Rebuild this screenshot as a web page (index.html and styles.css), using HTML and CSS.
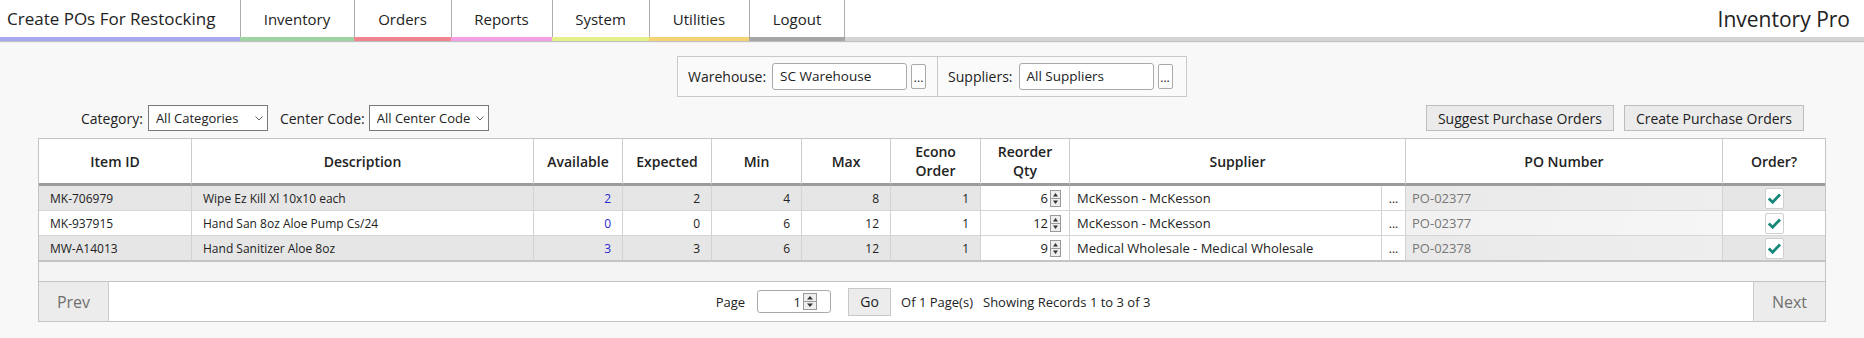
FILE: index.html
```html
<!DOCTYPE html>
<html lang="en">
<head>
<meta charset="utf-8">
<title>Create POs For Restocking</title>
<link rel="stylesheet" href="styles.css">
</head>
<body>
<nav class="topnav">
  <div class="nav-title">Create POs For Restocking</div>
  <a class="tab tab-inventory">Inventory</a>
  <a class="tab tab-orders">Orders</a>
  <a class="tab tab-reports">Reports</a>
  <a class="tab tab-system">System</a>
  <a class="tab tab-utilities">Utilities</a>
  <a class="tab tab-logout">Logout</a>
  <div class="nav-rest"><span class="brand">Inventory Pro</span></div>
</nav>

<main class="page">
  <div class="filters">
    <div class="filter-group">
      <span class="filter-label">Warehouse:</span>
      <div class="text-input">SC Warehouse</div>
      <span class="dots-btn">...</span>
    </div>
    <div class="filter-group filter-group-2">
      <span class="filter-label">Suppliers:</span>
      <div class="text-input">All Suppliers</div>
      <span class="dots-btn">...</span>
    </div>
  </div>

  <div class="toolbar">
    <div class="toolbar-left">
      <span class="lbl">Category:</span>
      <div class="select"><span class="select-text">All Categories</span><svg class="chev" width="8" height="5" viewBox="0 0 8 5"><path d="M0.5 0.5 L4 4 L7.5 0.5" fill="none" stroke="#666" stroke-width="1"/></svg></div>
      <span class="lbl lbl-center">Center Code:</span>
      <div class="select"><span class="select-text">All Center Code</span><svg class="chev" width="8" height="5" viewBox="0 0 8 5"><path d="M0.5 0.5 L4 4 L7.5 0.5" fill="none" stroke="#666" stroke-width="1"/></svg></div>
    </div>
    <div class="toolbar-right">
      <span class="btn">Suggest Purchase Orders</span>
      <span class="btn">Create Purchase Orders</span>
    </div>
  </div>

  <div class="grid">
    <table class="data">
      <colgroup>
        <col class="c-id"><col class="c-desc"><col class="c-avail"><col class="c-exp"><col class="c-min"><col class="c-max"><col class="c-econo"><col class="c-qty"><col class="c-sup"><col class="c-dots"><col class="c-po"><col>
      </colgroup>
      <thead>
        <tr>
          <th>Item ID</th><th>Description</th><th>Available</th><th>Expected</th><th>Min</th><th>Max</th><th>Econo<br>Order</th><th>Reorder<br>Qty</th><th colspan="2">Supplier</th><th>PO Number</th><th class="last">Order?</th>
        </tr>
      </thead>
      <tbody>
        <tr class="odd">
          <td>MK-706979</td><td>Wipe Ez Kill Xl 10x10 each</td><td class="num avail">2</td><td class="num">2</td><td class="num">4</td><td class="num">8</td><td class="num">1</td>
          <td class="qty"><div class="qty-box"><span>6</span><svg class="spin" width="11" height="17" viewBox="0 0 11 17"><rect x="0.5" y="0.5" width="10" height="16" fill="#eee" stroke="#999"/><line x1="1" y1="8.5" x2="10" y2="8.5" stroke="#999"/><path d="M3 6.5 L5.5 3 L8 6.5Z" fill="#333"/><path d="M3 10.5 L5.5 14 L8 10.5Z" fill="#333"/></svg></div></td>
          <td class="sup">McKesson - McKesson</td><td class="dots">...</td><td class="po">PO-02377</td>
          <td class="chk last"><span class="checkbox"><svg width="19" height="21" viewBox="0 0 19 21"><path d="M3.8 10.6 L7.6 14.2 L15 6.6" fill="none" stroke="#17877a" stroke-width="2.8"/></svg></span></td>
        </tr>
        <tr class="even">
          <td>MK-937915</td><td>Hand San 8oz Aloe Pump Cs/24</td><td class="num avail">0</td><td class="num">0</td><td class="num">6</td><td class="num">12</td><td class="num">1</td>
          <td class="qty"><div class="qty-box"><span>12</span><svg class="spin" width="11" height="17" viewBox="0 0 11 17"><rect x="0.5" y="0.5" width="10" height="16" fill="#eee" stroke="#999"/><line x1="1" y1="8.5" x2="10" y2="8.5" stroke="#999"/><path d="M3 6.5 L5.5 3 L8 6.5Z" fill="#333"/><path d="M3 10.5 L5.5 14 L8 10.5Z" fill="#333"/></svg></div></td>
          <td class="sup">McKesson - McKesson</td><td class="dots">...</td><td class="po">PO-02377</td>
          <td class="chk last"><span class="checkbox"><svg width="19" height="21" viewBox="0 0 19 21"><path d="M3.8 10.6 L7.6 14.2 L15 6.6" fill="none" stroke="#17877a" stroke-width="2.8"/></svg></span></td>
        </tr>
        <tr class="odd">
          <td>MW-A14013</td><td>Hand Sanitizer Aloe 8oz</td><td class="num avail">3</td><td class="num">3</td><td class="num">6</td><td class="num">12</td><td class="num">1</td>
          <td class="qty"><div class="qty-box"><span>9</span><svg class="spin" width="11" height="17" viewBox="0 0 11 17"><rect x="0.5" y="0.5" width="10" height="16" fill="#eee" stroke="#999"/><line x1="1" y1="8.5" x2="10" y2="8.5" stroke="#999"/><path d="M3 6.5 L5.5 3 L8 6.5Z" fill="#333"/><path d="M3 10.5 L5.5 14 L8 10.5Z" fill="#333"/></svg></div></td>
          <td class="sup">Medical Wholesale - Medical Wholesale</td><td class="dots">...</td><td class="po">PO-02378</td>
          <td class="chk last"><span class="checkbox"><svg width="19" height="21" viewBox="0 0 19 21"><path d="M3.8 10.6 L7.6 14.2 L15 6.6" fill="none" stroke="#17877a" stroke-width="2.8"/></svg></span></td>
        </tr>
      </tbody>
    </table>
    <div class="grid-gap"></div>
    <div class="pager">
      <span class="pager-btn prev">Prev</span>
      <div class="pager-mid">
        <span class="pg-label">Page</span>
        <div class="page-input"><span>1</span><svg width="14" height="17" viewBox="0 0 14 17"><rect x="0.5" y="0.5" width="13" height="16" fill="#eee" stroke="#999"/><line x1="1" y1="8.5" x2="13" y2="8.5" stroke="#999"/><path d="M4 6.5 L7 3 L10 6.5Z" fill="#333"/><path d="M4 10.5 L7 14 L10 10.5Z" fill="#333"/></svg></div>
        <span class="go-btn">Go</span>
        <span class="pg-text">Of 1 Page(s)</span>
        <span class="pg-text">Showing Records 1 to 3 of 3</span>
      </div>
      <span class="pager-btn next">Next</span>
    </div>
  </div>
</main>
</body>
</html>
```
FILE: styles.css
```css
* { box-sizing: border-box; }
body {
  margin: 0;
  background: #f8f8f8;
  font-family: "Open Sans", "Noto Sans", sans-serif;
  color: #222;
}

/* ---------- top navigation ---------- */
.topnav {
  display: flex;
  height: 41px;
  background: #fff;
  box-shadow: 0 1px 1px rgba(0, 0, 0, 0.22);
}
.nav-title, .tab, .nav-rest {
  display: flex;
  align-items: center;
  height: 41px;
  border-bottom: 4px solid #d4d4d4;
}
.nav-title {
  width: 240px;
  padding-left: 7px;
  font-size: 17px;
  border-bottom-color: #a8a8ef;
}
.tab {
  justify-content: center;
  font-size: 15px;
  color: #222;
  box-shadow: inset 1px 0 0 #adadad;
}
.tab-inventory { width: 114px; border-bottom-color: #9dd4a4; }
.tab-orders    { width: 97px;  border-bottom-color: #f2848f; }
.tab-reports   { width: 101px; border-bottom-color: #f4a0e4; }
.tab-system    { width: 97px;  border-bottom-color: #e4ef8a; }
.tab-utilities { width: 100px; border-bottom-color: #f5d274; }
.tab-logout    { width: 96px;  border-bottom-color: #a6a6a6; box-shadow: inset 1px 0 0 #adadad, inset -1px 0 0 #adadad; }
.nav-rest {
  flex: 1;
  justify-content: flex-end;
  padding-right: 14px;
}
.brand { font-size: 21px; }

/* ---------- page ---------- */
.page { padding: 0 38px; }

.filters {
  display: flex;
  width: 510px;
  height: 41px;
  margin: 15px auto 0;
  border: 1px solid #c9c9c9;
  background: #fafafa;
}
.filter-group {
  display: flex;
  align-items: center;
  padding: 0 11px 0 10px;
}
.filter-group-2 {
  flex: 1;
  border-left: 1px solid #c9c9c9;
  padding-left: 10px;
}
.filter-label { font-size: 14px; margin-right: 6px; }
.text-input {
  width: 135px;
  height: 27px;
  border: 1px solid #aaa;
  border-radius: 3px;
  background: #fff;
  padding-left: 7px;
  font-size: 13.5px;
  line-height: 25px;
}
.dots-btn {
  display: flex;
  align-items: flex-end;
  justify-content: center;
  width: 15px;
  height: 25px;
  margin-left: 4px;
  border: 1px solid #aaa;
  border-radius: 2px;
  background: #fff;
  font-size: 12px;
  line-height: 16px;
  padding-bottom: 2px;
}

.toolbar {
  display: flex;
  justify-content: space-between;
  align-items: center;
  height: 26px;
  margin-top: 8px;
  padding: 0 22px 0 43px;
}
.toolbar-left, .toolbar-right { display: flex; align-items: center; }
.lbl { font-size: 14px; margin-right: 5px; }
.lbl-center { margin-left: 12px; margin-right: 4px; }
.select {
  display: flex;
  align-items: center;
  width: 120px;
  height: 26px;
  border: 1px solid #7a7a7a;
  background: #fff;
  padding-left: 7px;
  overflow: hidden;
}
.select-text { flex: 1; font-size: 13px; white-space: nowrap; overflow: hidden; }
.chev { flex: none; margin: 1px 4px 0 2px; }
.btn {
  display: flex;
  align-items: center;
  height: 26px;
  padding: 0 11px;
  border: 1px solid #bdbdbd;
  background: #ebebeb;
  font-size: 14px;
}
.btn + .btn { margin-left: 10px; }

/* ---------- grid ---------- */
.grid {
  margin-top: 7px;
  border: 1px solid #c4c4c4;
  background: #fff;
}
.data {
  width: 100%;
  border-collapse: separate;
  border-spacing: 0;
  table-layout: fixed;
}
.c-id { width: 153px; }
.c-desc { width: 342px; }
.c-avail, .c-exp, .c-max, .c-qty { width: 89px; }
.c-min, .c-econo { width: 90px; }
.c-sup { width: 312px; }
.c-dots { width: 24px; }
.c-po { width: 317px; }

.data th {
  height: 47px;
  padding: 0;
  font-size: 14px;
  font-weight: 600;
  line-height: 19px;
  text-align: center;
  background: #fff;
  border-right: 1px solid #cdcdcd;
  border-bottom: 3px solid #9b9b9b;
}
.data td {
  height: 25px;
  padding: 0 11px;
  font-size: 12px;
  white-space: nowrap;
  border-right: 1px solid #d2d2d2;
  border-bottom: 1px solid #d6d6d6;
}
.data th.last, .data td.last { border-right: none; }
.data tbody tr:last-child td { border-bottom-color: #c4c4c4; }
.odd td { background: #e6e6e6; }
.even td { background: #fff; }
.data td.num { text-align: right; }
.data td.avail { color: #2727d8; }
.data td.qty { padding: 0 8px 0 0; background: #fff; }
.qty-box {
  display: flex;
  justify-content: flex-end;
  align-items: center;
  gap: 2px;
  font-size: 13px;
}
.spin { display: block; }
.data td.sup { padding-left: 7px; font-size: 13px; background: #fff; }
.data td.dots { padding: 0; text-align: center; font-size: 12px; background: #fff; }
.data td.po { padding-left: 6px; font-size: 13px; color: #777; }
.odd td.po { background: linear-gradient(to right, #e9e9e9, #eeeeee); }
.even td.po { background: linear-gradient(to right, #f1f1f1, #f6f6f6); }
.data td.chk { padding: 0; text-align: center; }
.checkbox {
  display: inline-block;
  vertical-align: middle;
  width: 19px;
  height: 21px;
  border: 1px solid #cfcfcf;
  border-radius: 2px;
  background: #fff;
}
.checkbox svg { display: block; margin: -1px; }

.grid-gap {
  height: 21px;
  background: #f4f4f4;
  border-top: 1px solid #c4c4c4;
  border-bottom: 1px solid #c4c4c4;
}
.pager {
  display: flex;
  height: 39px;
  background: #fff;
}
.pager-btn {
  display: flex;
  align-items: center;
  justify-content: center;
  background: #ececec;
  color: #707070;
  font-size: 16px;
}
.prev { width: 70px; border-right: 1px solid #cccccc; }
.next { width: 72px; border-left: 1px solid #cccccc; }
.pager-mid {
  flex: 1;
  display: flex;
  align-items: center;
  justify-content: center;
  font-size: 13px;
  padding-left: 4px;
}
.pg-label { margin-right: 12px; }
.page-input {
  display: flex;
  align-items: center;
  justify-content: flex-end;
  gap: 2px;
  width: 74px;
  height: 23px;
  border: 1px solid #aaa;
  border-radius: 3px;
  padding-right: 13px;
  margin-right: 17px;
}
.go-btn {
  display: flex;
  align-items: center;
  justify-content: center;
  width: 43px;
  height: 28px;
  border: 1px solid #c8c8c8;
  background: #ececec;
  font-size: 14px;
  margin-right: 10px;
}
.pg-text + .pg-text { margin-left: 10px; }
```
